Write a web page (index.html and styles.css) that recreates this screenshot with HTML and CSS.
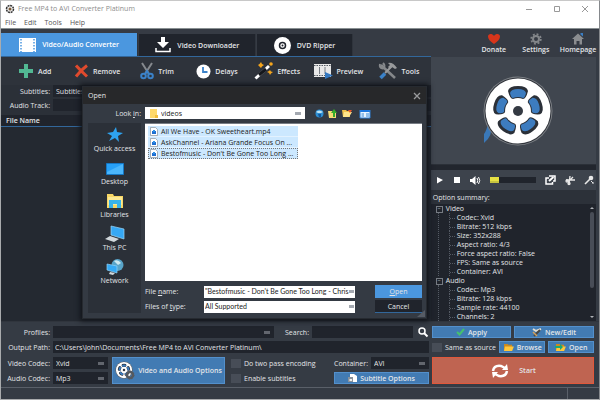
FILE: index.html
```html
<!DOCTYPE html>
<html lang="en">
<head>
<meta charset="utf-8">
<title>Free MP4 to AVI Converter Platinum</title>
<link rel="stylesheet" href="styles.css">
</head>
<body>
<svg class="defs" aria-hidden="true">
  <symbol id="reel" viewBox="-36 -36 72 72">
    <path d="M-27 14 Q-25 25 -34 32 L-34 23 Q-31 19 -30 12Z" fill="#3a78b8"/>
    <circle r="34.500" fill="#7b7f84"/>
    <circle r="33.500" fill="#30343b"/>
    <circle r="32.500" fill="#fff"/>
    <g id="hole"><path d="M-10 -20Q-9 -25 0 -25Q9 -25 10 -20Q8 -12 5 -12Q0 -14 -5 -12Q-8 -12 -10 -20Z" fill="#2b3038"/><path d="M-8 -18Q-7 -22 0 -22Q7 -22 8 -18Q7 -13 5 -13Q0 -15 -5 -13Q-7 -13 -8 -18Z" fill="#3d7cbf"/></g>
    <use href="#hole" transform="rotate(72)"/><use href="#hole" transform="rotate(144)"/><use href="#hole" transform="rotate(216)"/><use href="#hole" transform="rotate(288)"/>
    <circle r="5" fill="#343a43"/>
  </symbol>
  <symbol id="file" viewBox="0 0 8 9"><path d="M.5.500H5.500L7.500 2.500V8.500H.5Z" fill="#fff" stroke="#8b9299" stroke-width=".7"/><path d="M2 4H6V7H2Z" fill="#1d6ed0"/><path d="M3 3H5V5H3Z" fill="#2f91e8"/></symbol>
  <symbol id="folder" viewBox="0 0 12 10"><path d="M1 1H5L6 2H10V9H1Z" fill="#c98a22"/><path d="M2 4H12L10 9H1Z" fill="#ffc73b"/></symbol>
</svg>

<div class="window">
  <header class="titlebar">
    <svg class="app-icon" viewBox="-5 -5 10 10"><circle r="3.500" fill="#eee" stroke="#333" stroke-width="1.500" stroke-dasharray="2 .7"/><circle r="1.500" fill="#7b5a38"/></svg>
    <h1>Free MP4 to AVI Converter Platinum</h1>
    <div class="window-buttons">
      <button aria-label="Minimize"><svg viewBox="0 0 8 8"><path d="M1 4.500H7"/></svg></button>
      <button aria-label="Maximize"><svg viewBox="0 0 8 8"><path d="M1.500 1.500H6.500V6.500H1.500Z"/></svg></button>
      <button aria-label="Close"><svg viewBox="0 0 8 8"><path d="M1 1L7 7M7 1L1 7"/></svg></button>
    </div>
  </header>
  <nav class="menubar"><button>File</button><button>Edit</button><button>Tools</button><button>Help</button></nav>

  <div class="top">
    <nav class="tabs">
      <button class="tab active"><svg width="17" height="14" viewBox="0 0 17 14"><path d="M0 0H17V14H0Z" fill="#fff"/><path d="M2 1V14M15 1V14" stroke="#4b97df" stroke-width="1.500" stroke-dasharray="1.500 1.500"/></svg>Video/Audio Converter</button>
      <button class="tab"><svg width="16" height="16" viewBox="0 0 16 16" fill="#fff"><path d="M6 0H10V5H14L8 11L2 5H6Z"/><path d="M1 11V14.500H15V11" fill="none" stroke="#fff" stroke-width="1.500"/></svg>Video Downloader</button>
      <button class="tab"><svg width="17" height="17" viewBox="0 0 17 17"><circle cx="8.500" cy="8.500" r="8.500" fill="#fff"/><circle cx="8.500" cy="8.500" r="3" fill="#fff" stroke="#20242c" stroke-width="1.500"/><circle cx="8.500" cy="8.500" r="1" fill="#20242c"/></svg>DVD Ripper</button>
    </nav>
    <nav class="links">
      <a href="#donate"><svg width="14" height="12" viewBox="0 0 14 12"><path d="M7 11Q1 7 1 3.500C1 .5 5 0 7 3C9 0 13 .5 13 3.500Q13 7 7 11Z" fill="#d8351b"/></svg>Donate</a>
      <a href="#settings"><svg width="12" height="12" viewBox="-6 -6 12 12" fill="none" stroke="#83868a"><circle r="3" stroke-width="2"/><circle r="4.800" stroke-width="1.800" stroke-dasharray="1.900 1.870"/></svg>Settings</a>
      <a href="#homepage"><svg width="12" height="12" viewBox="0 0 12 12"><path d="M6 .5L12 6H10V11.500H7.500V8H4.500V11.500H2V6H0Z" fill="#8b8d90"/><path d="M8.500 0H11V3.500L8.500 1.500Z" fill="#3b7fc5"/></svg>Homepage</a>
    </nav>
  </div>

  <main class="main">
    <section class="workspace">
      <div class="toolbar">
        <button><svg width="16" height="16" viewBox="0 0 16 16"><path d="M6 1H10V6H15V10H10V15H6V10H1V6H6Z" fill="#52b893"/></svg>Add</button>
        <button><svg width="15" height="14" viewBox="0 0 15 14"><path d="M2 1.500Q7 7 13 12.500M13 1.500Q7 6 2 12.500" stroke="#e04a2d" stroke-width="3"/></svg>Remove</button>
        <button><svg width="14" height="18" viewBox="0 0 14 18" fill="none"><path d="M2 1L9 12M12 1L5 12" stroke="#85898e" stroke-width="2"/><g stroke="#3b82c9" stroke-width="2"><circle cx="3.500" cy="14" r="2.300"/><circle cx="10.500" cy="14" r="2.300"/><path d="M5 12L7 9L9 12"/></g></svg>Trim</button>
        <button><svg width="15" height="15" viewBox="0 0 15 15"><circle cx="7.500" cy="7.500" r="7" fill="#fff"/><path d="M7 3V8H11.500" fill="none" stroke="#3b82c9" stroke-width="1.800"/></svg>Delays</button>
        <button><svg width="19" height="18" viewBox="0 0 19 18"><path d="M1.500 16.500L15 4" stroke="#fff" stroke-width="3"/><path d="M5 13L12 7" stroke="#14171c" stroke-width="3"/><g fill="#f4a51d"><path d="M7 0L8 2L10 3L8 4.500L7 6L5.500 4.500L4 3L5.500 2Z"/><circle cx="17" cy="2" r="1.800"/><path d="M16 8L17 9.500L19 10L17 11.500L16 13L15 11L13 10L15 9Z"/></g></svg>Effects</button>
        <button><svg width="19" height="16" viewBox="0 0 19 16"><path d="M0 1H17V14H0Z" fill="#e8e8e8"/><path d="M0 2.500H17M0 12.500H17" stroke="#555b63" stroke-width="1.200" stroke-dasharray="1.500 1"/><path d="M5.500 4V11M11 4V11" stroke="#777c83"/><path d="M11 9L19 12.500L11 16Z" fill="#3478c0"/></svg>Preview</button>
        <button><svg width="20" height="18" viewBox="0 0 20 18" fill="none"><path d="M3 3L17 16" stroke="#85888b" stroke-width="2.500"/><path d="M2 2Q1 6 5 6.500Q8 4 5 1" stroke="#85888b" stroke-width="2"/><path d="M14 4L7 11" stroke="#989a9c" stroke-width="2"/><path d="M10 1Q15 0 19 6L17 7L14 5L12 7L10 5L12 3Z" fill="#989a9c"/><path d="M2.500 16L7 11.500" stroke="#3b82c9" stroke-width="3.500"/></svg>Tools</button>
      </div>
      <div class="tracks">
        <label for="subs">Subtitles:</label><select id="subs"><option>Subtitles</option></select>
        <label for="track">Audio Track:</label><select id="track"><option></option></select>
      </div>
      <div class="file-head">File Name</div>
      <div class="file-body"></div>
    </section>

    <aside class="side">
      <div class="preview"><svg width="72" height="72"><use href="#reel"/></svg></div>
      <div class="player">
        <button aria-label="Play"><svg width="8" height="8" viewBox="0 0 8 8"><path d="M1 1L7 4L1 7.500Z" fill="#fff"/></svg></button>
        <button aria-label="Stop"><svg width="8" height="8" viewBox="0 0 8 8"><path d="M1 1H7V7H1Z" fill="#fff"/></svg></button>
        <button aria-label="Volume"><svg width="11" height="9" viewBox="0 0 11 9"><path d="M0 3H2L5.500 0V9L2 6H0Z" fill="#fff"/><path d="M7 2Q8.500 4.500 7 7M8.500 1Q11 4.500 8.500 8" fill="none" stroke="#fff"/></svg></button>
        <div class="volume"><span></span></div>
        <button aria-label="Pop out"><svg width="11" height="10" viewBox="0 0 11 10" fill="none" stroke="#fff" stroke-width="1.500"><path d="M4 3H1V9H7.500V7"/><path d="M4 1H10V6H8" /><path d="M4 6L8.500 2" stroke-width="2"/></svg></button>
        <button aria-label="Cut"><svg width="10" height="10" viewBox="0 0 10 10" fill="none" stroke="#e8e8e8" stroke-width="1.300"><path d="M1 5H10M5 1L4 9M3 7L8 2"/><circle cx="2" cy="6" r="1"/><circle cx="4" cy="8.500" r="1"/></svg></button>
        <button aria-label="Adjust"><svg width="11" height="10" viewBox="0 0 11 10"><path d="M1 9L6 4" stroke="#e8e8e8" stroke-width="1.600"/><circle cx="7" cy="3" r="2.300" fill="#e8e8e8"/><path d="M8 8H10M7 6L9 8" stroke="#e8e8e8"/></svg></button>
      </div>
      <h2>Option summary:</h2>
      <div class="tree">
        <ul>
          <li>Video<ul><li>Codec: Xvid</li><li>Bitrate: 512 kbps</li><li>Size: 352x288</li><li>Aspect ratio: 4/3</li><li>Force aspect ratio: False</li><li>FPS: Same as source</li><li>Container: AVI</li></ul></li>
          <li>Audio<ul><li>Codec: Mp3</li><li>Bitrate: 128 kbps</li><li>Sample rate: 44100</li><li>Channels: 2</li></ul></li>
        </ul>
        <div class="scrollbar"><i class="up"></i><b></b><i class="down"></i></div>
      </div>
    </aside>
  </main>

  <form class="settings">
    <div class="fields">
      <div class="row">
        <label class="name" for="profiles">Profiles:</label><select id="profiles" class="grow"><option></option></select>
        <label for="search" class="search-label">Search:</label><input id="search" class="search">
        <button type="button" class="find" aria-label="Search"><svg width="10" height="10" viewBox="0 0 10 10" fill="none" stroke="#fff"><circle cx="4" cy="4" r="3" stroke-width="1.500"/><path d="M6 6L9.500 9.500" stroke-width="2"/></svg></button>
      </div>
      <div class="row">
        <label class="name" for="path">Output Path:</label><input id="path" class="grow" value="C:\Users\John\Documents\Free MP4 to AVI Converter Platinum\">
      </div>
      <div class="codecs">
        <div class="stack">
          <div class="row"><label class="name" for="vc">Video Codec:</label><select id="vc" class="codec"><option>Xvid</option></select></div>
          <div class="row"><label class="name" for="ac">Audio Codec:</label><select id="ac" class="codec"><option>Mp3</option></select></div>
        </div>
        <button type="button" class="blue av"><svg width="20" height="19" viewBox="0 0 20 19"><use href="#reel" width="18" height="18"/><circle cx="15" cy="14" r="3" fill="none" stroke="#55595e" stroke-width="2.500"/><circle cx="15" cy="14" r="4" fill="none" stroke="#55595e" stroke-dasharray="1.500 1.600"/></svg>Video and Audio Options</button>
        <div class="stack checks">
          <label class="check"><input type="checkbox">Do two pass encoding</label>
          <label class="check"><input type="checkbox">Enable subtitles</label>
        </div>
        <div class="stack container">
          <div class="row"><label for="ct">Container:</label><select id="ct" class="grow"><option>AVI</option></select></div>
          <button type="button" class="blue"><svg width="9" height="10" viewBox="0 0 9 10"><path d="M2 1H6L9 3V9H2Z" fill="#fff"/><path d="M0 4H5V9H0Z" fill="#89929b"/><path d="M1.500 6H4V8H1.500Z" fill="#eee"/></svg>Subtitle Options</button>
        </div>
      </div>
    </div>
    <div class="actions">
      <div class="pair"><button type="button" class="blue"><svg width="9" height="8" viewBox="0 0 9 8"><path d="M1 4L3.500 6.500L8 1" fill="none" stroke="#45c06f" stroke-width="2"/></svg>Apply</button><button type="button" class="blue"><svg width="10" height="9" viewBox="0 0 10 9"><path d="M1 1L4 3L9 1" fill="none" stroke="#e5dfd2" stroke-width="2"/><path d="M2 8L8 2" stroke="#4a4944" stroke-width="2"/><path d="M1 4L5 8" stroke="#d3a15e" stroke-width="1.500"/></svg>New/Edit</button></div>
      <div class="pair paths"><label class="check"><input type="checkbox">Same as source</label><button type="button" class="blue"><svg width="11" height="9"><use href="#folder"/></svg>Browse</button><button type="button" class="blue"><svg width="11" height="9"><use href="#folder"/><path d="M0 3H5V1L8 4L5 7V5H0Z" fill="#18a878"/></svg>Open</button></div>
      <button type="button" class="start"><svg width="20" height="16" viewBox="0 0 20 16"><path d="M3 8Q4 2 11 3L15 5M17 8Q16 14 9 13L5 11" fill="none" stroke="#fff" stroke-width="2.500"/><path d="M12 7L18 7L17 1ZM8 9L2 9L3 15Z" fill="#fff"/></svg>Start</button>
    </div>
  </form>
  <footer class="status"><span></span></footer>

  <section class="dialog" role="dialog" aria-label="Open">
    <header><h2>Open</h2><button aria-label="Close dialog"><svg width="8" height="8" viewBox="0 0 8 8"><path d="M1 1L7 7M7 1L1 7" stroke="#9a9b9d" stroke-width="1.300"/></svg></button></header>
    <div class="dialog-body">
      <label class="look" for="look">Look <u>i</u>n:</label>
      <div class="lookbar">
        <div class="look-select"><svg width="9" height="9" viewBox="0 0 9 9"><path d="M1 0H8V9H1Z" fill="#ffd96b"/><path d="M6 6H9V9H6Z" fill="#f2bd3d"/></svg><select id="look"><option>videos</option></select></div>
        <button aria-label="Back"><svg width="9" height="9" viewBox="0 0 9 9"><circle cx="4.500" cy="4.500" r="4" fill="#2e8fd3"/><path d="M1 3Q4 0 8 3L6 4H3Z" fill="#bfe3f4"/><path d="M3 5H6V8H4Z" fill="#12569a"/></svg></button>
        <button aria-label="Up one level"><svg width="10" height="9" viewBox="0 0 10 9"><path d="M0 2H4L5 3H8V9H1Z" fill="#f6dc74"/><path d="M5 8V4H3L6 0L9 4H7V8Z" fill="#36ad2b"/></svg></button>
        <button aria-label="New folder"><svg width="10" height="9" viewBox="0 0 10 9"><path d="M0 1H4L5 2H8V8H1Z" fill="#f2c44e"/><path d="M2 3H10L7 8H1Z" fill="#ffe68b"/><path d="M6 1H10L8 4Z" fill="#e8562a"/></svg></button>
        <button aria-label="View"><svg width="10" height="9" viewBox="0 0 10 9"><path d="M0 1H10V9H0Z" fill="#eaf4ff"/><path d="M0 1H10V3H0Z" fill="#1d78e0"/><path d="M1.500 5H4M6 5H9M1.500 7H4M6 7H9" stroke="#3b8cd8"/><path d="M0 1V9H10V1" fill="none" stroke="#2f80d8"/></svg></button>
      </div>
      <nav class="places">
        <button><svg width="16" height="16" viewBox="0 0 16 16"><path d="M9 0L10 5L16 6L11 9L12 15L8 11L2 14L5 9L0 6L6 5Z" fill="#2ea3f0"/></svg>Quick access</button>
        <button><svg width="18" height="16" viewBox="0 0 18 16"><path d="M.5 3.500H17.500V14.500H.5Z" fill="#27a0f6" stroke="#1577c4"/><path d="M1 12L17 4V14H1Z" fill="#4bb6fb"/></svg>Desktop</button>
        <button><svg width="18" height="16" viewBox="0 0 18 16"><path d="M1 1H7L8 3H17V15H1Z" fill="#f8d765"/><path d="M2 4H16V12H2Z" fill="#fce994"/><path d="M3 15V7H15V15H11V11H7V15Z" fill="#38b3ea"/></svg>Libraries</button>
        <button><svg width="20" height="16" viewBox="0 0 20 16"><path d="M6 0L19 3V13L6 9Z" fill="#36a8f4" stroke="#9ed5f5" stroke-width=".7"/><path d="M0 13L5 10L14 13L9 16Z" fill="#d2d8dc"/></svg>This PC</button>
        <button><svg width="18" height="16" viewBox="0 0 18 16"><circle cx="11.500" cy="6" r="6" fill="#58a4c9"/><path d="M8 2Q12 0 15 4L12 6Z" fill="#cbe8f1"/><path d="M1 5L11 7V14L1 11Z" fill="#35aaf5" stroke="#8fd1f6" stroke-width=".7"/><path d="M4 13L9 14L7 16L3 15Z" fill="#d2d8dc"/></svg>Network</button>
      </nav>
      <ul class="files">
        <li><svg width="8" height="9"><use href="#file"/></svg>All We Have - OK Sweetheart.mp4</li>
        <li><svg width="8" height="9"><use href="#file"/></svg>AskChannel - Ariana Grande Focus On ...</li>
        <li class="focus"><svg width="8" height="9"><use href="#file"/></svg>Bestofmusic - Don't Be Gone Too Long ...</li>
      </ul>
      <div class="names">
        <label for="fname">File <u>n</u>ame:</label><select id="fname"><option>"Bestofmusic - Don't Be Gone Too Long - Chris</option></select><button class="open"><u>O</u>pen</button>
        <label for="ftype">Files of <u>t</u>ype:</label><select id="ftype"><option>All Supported</option></select><button class="cancel">Cancel</button>
      </div>
      <svg class="resize" width="8" height="7" viewBox="0 0 8 7"><path d="M8 0V7H0Z" fill="#565c65"/></svg>
    </div>
  </section>
</div>
</body>
</html>
```

FILE: styles.css
```css
* { box-sizing: border-box; }
body { margin: 0; font: 7px/9px "Open Sans", "Noto Sans", sans-serif; color: #e3e5e8; }
button, input, select { font: inherit; color: inherit; margin: 0; padding: 0; border: 0; border-radius: 0; background: none; min-width: 0; }
button { display: flex; align-items: center; justify-content: center; white-space: nowrap; }
h1, h2, ul { margin: 0; padding: 0; font: inherit; list-style: none; }
svg { flex: none; display: block; overflow: visible; }
label { white-space: nowrap; }
.defs { position: absolute; width: 0; height: 0; }

.window { position: relative; display: flex; flex-direction: column; min-height: 100vh; background: #353b44; border: 1px solid #a9abad; border-top-color: #c8c8c8; border-right-color: #85888c; }
.titlebar { display: flex; align-items: center; height: 15px; padding: 0 10px 0 4px; background: #fff; color: #8d8d8d; }
.titlebar h1 { flex: 1; padding-left: 3px; }
.app-icon { width: 10px; height: 10px; }
.window-buttons { display: flex; gap: 20px; }
.window-buttons svg { width: 8px; height: 8px; fill: none; stroke: #999; stroke-width: 1; }
.menubar { display: flex; gap: 8px; height: 13px; padding: 1px 4px 0; background: #fff; color: #555; border-bottom: 1px solid #899092; }

.top, .main { display: grid; grid-template-columns: 429fr 168fr; }
.top { height: 28px; background: #363b44; }
.tabs { display: grid; grid-template-columns: 137fr 117fr 95fr 77fr; column-gap: 1px; align-items: end; border-bottom: 1px solid #32679b; }
.tab { height: 22px; gap: 6px; background: #20242c; font-weight: 600; border-right: 1px solid #2f343c; }
.tab.active { height: 23px; background: #4b97df; color: #fff; }
.links { display: grid; grid-template-columns: 1fr 1fr 1fr; align-items: center; padding-left: 42px; }
.links a { display: flex; flex-direction: column; align-items: center; color: inherit; text-decoration: none; font-weight: 600; }

.main { flex: 1; background: #20242c; }
.workspace { display: flex; flex-direction: column; background: #2b3038; }
.toolbar { display: grid; grid-template-columns: 56fr 66fr 56fr 58fr 59fr 64fr 53fr; height: 28px; padding-left: 17px; background: #2e333b; font-weight: 600; }
.toolbar button { justify-content: flex-start; gap: 4px; }
.tracks { display: grid; grid-template-columns: 49px 1fr; gap: 2px 3px; padding-bottom: 4px; text-align: right; align-items: center; }
.tracks select, .settings select, .settings input { height: 12px; background-color: #20242c; }
select { appearance: none; padding: 0 3px; background: linear-gradient(#62666e, #62666e) no-repeat right 4px center / 6px 3px; }
.file-head { padding: 1px 5px; background: #20242c; font-weight: 600; border-bottom: 1px solid #32679b; }
.file-body { flex: 1; background: #242931; }

.side { display: flex; flex-direction: column; background: #2c3139; border-right: 3px solid #353b44; }
.preview { height: 108px; display: flex; align-items: center; justify-content: center; padding-left: 9px; background: #40464f; border-bottom: 1px solid #2b3038; }
.player { display: flex; align-items: center; gap: 9px; height: 25px; padding: 0 1px 0 5px; background: #3d434c; border-top: 5px solid #22262e; }
.volume { flex: 1; height: 6px; background: #20242c; }
.volume span { display: block; width: 20%; height: 100%; background: #e8e244; border-bottom: 2px solid #c7c43f; }
.side h2 { height: 14px; padding: 3px 2px; }
.tree { flex: 1; display: flex; justify-content: space-between; background: #20242c; }
.tree > ul { padding-left: 5px; }
.tree > ul > li { position: relative; padding-left: 10px; }
.tree > ul > li::before { content: "−"; position: absolute; left: 0; top: 2px; width: 5px; height: 5px; border: 1px solid #767b83; font-size: 5px; line-height: 3px; text-align: center; }
.tree li ul { margin-left: -8px; padding-left: 10px; border-left: 1px dotted #555b65; }
.tree li li { position: relative; padding-left: 7px; border-left: 1px dotted #555b65; }
.tree li li::before { content: ""; position: absolute; left: 0; top: 5px; width: 5px; border-top: 1px dotted #555b65; }
.scrollbar { display: flex; flex-direction: column; align-items: center; width: 8px; padding: 3px 0; gap: 3px; }
.scrollbar b { width: 4px; height: 76px; border-radius: 2px; background: #484d57; }
.scrollbar i { border: 2px solid transparent; }
.scrollbar .up { border-top: 0; border-bottom-color: #aeb1b6; }
.scrollbar .down { border-bottom: 0; border-top-color: #aeb1b6; margin-top: auto; }

.settings { display: grid; grid-template-columns: 428fr 162fr; gap: 3px; padding: 4px 5px 3px 0; border-top: 1px solid #30353d; }
.fields, .actions, .stack { display: flex; flex-direction: column; gap: 3px; }
.row { display: flex; align-items: center; gap: 3px; height: 12px; }
.name { width: 49px; text-align: right; }
.grow { flex: 1; }
.settings input { padding: 0 2px; }
.search-label { padding-left: 8px; }
.search { width: 101px; }
.find { width: 13px; }
.codecs { display: flex; gap: 4px; padding-top: 1px; }
.codec { width: 55px; }
.blue { gap: 3px; height: 12px; background: #427bb3; border: 1px solid #5390cc; font-weight: 600; }
.av { width: 113px; height: 27px; }
.checks { padding-left: 2px; flex: 1; }
.check { display: flex; align-items: center; gap: 3px; height: 12px; }
.settings .check input { appearance: none; width: 10px; height: 9px; background: #474d57; }
.container { width: 95px; }
.pair { display: grid; grid-template-columns: 79fr 80fr; gap: 3px; }
.paths { grid-template-columns: 63fr 47fr 46fr; }
.start { flex: 1; gap: 9px; margin-top: 1px; background: #bf6451; border: 1px solid #e0583b; font-weight: 600; }
.status { height: 12px; border-top: 1px solid #5a6069; display: flex; justify-content: flex-end; padding-right: 31px; }
.status span { border-left: 1px solid #5a6069; }

.dialog { position: absolute; left: 81px; top: 85px; width: 345px; background: #343a43; border: 1px solid #262a30; box-shadow: 0 0 5px 2px #11141a; }
.dialog header { display: flex; align-items: center; justify-content: space-between; height: 17px; padding: 0 5px; background: #27282a; }
.dialog-body { position: relative; display: grid; grid-template-columns: 53px 1fr; gap: 4px; padding: 3px 4px 5px 5px; }
.look { align-self: center; text-align: right; }
.lookbar { display: flex; align-items: center; height: 12px; gap: 4px; }
.look-select { display: flex; align-items: center; width: 160px; height: 12px; margin-right: 6px; padding-left: 4px; background: #fff; color: #222; }
.look-select select { flex: 1; }
.look-select select, .names select { background-image: linear-gradient(#a4a9b1, #a4a9b1); }
.lookbar button:last-child { margin-left: 4px; }
.places { grid-row: span 2; display: flex; flex-direction: column; gap: 7px; padding-top: 4px; background: #2b3038; }
.places button { flex-direction: column; gap: 1px; }
.files { height: 158px; padding: 2px 3px; background: #fff; color: #222; border-top: 1px solid #777c84; }
.files li { display: flex; align-items: center; gap: 3px; width: 150px; height: 11px; padding-left: 2px; background: #cce8ff; border-bottom: 1px solid #e3f2ff; white-space: nowrap; }
.files .focus { border: 1px dotted #777; padding-left: 1px; }
.names { display: grid; grid-template-columns: 59px 151px 1fr; align-items: center; row-gap: 2px; }
.names select { height: 12px; background-color: #fff; background-position: right 1px center; background-size: 5px 3px; color: #222; padding-right: 6px; padding-left: 1px; font-family: Lato, sans-serif; }
.names button { width: 47px; height: 13px; justify-self: end; }
.open { background: #4b97df; }
.cancel { background: #20242c; border-bottom: 1px solid #32679b; }
.resize { position: absolute; right: 1px; bottom: 1px; }
```
